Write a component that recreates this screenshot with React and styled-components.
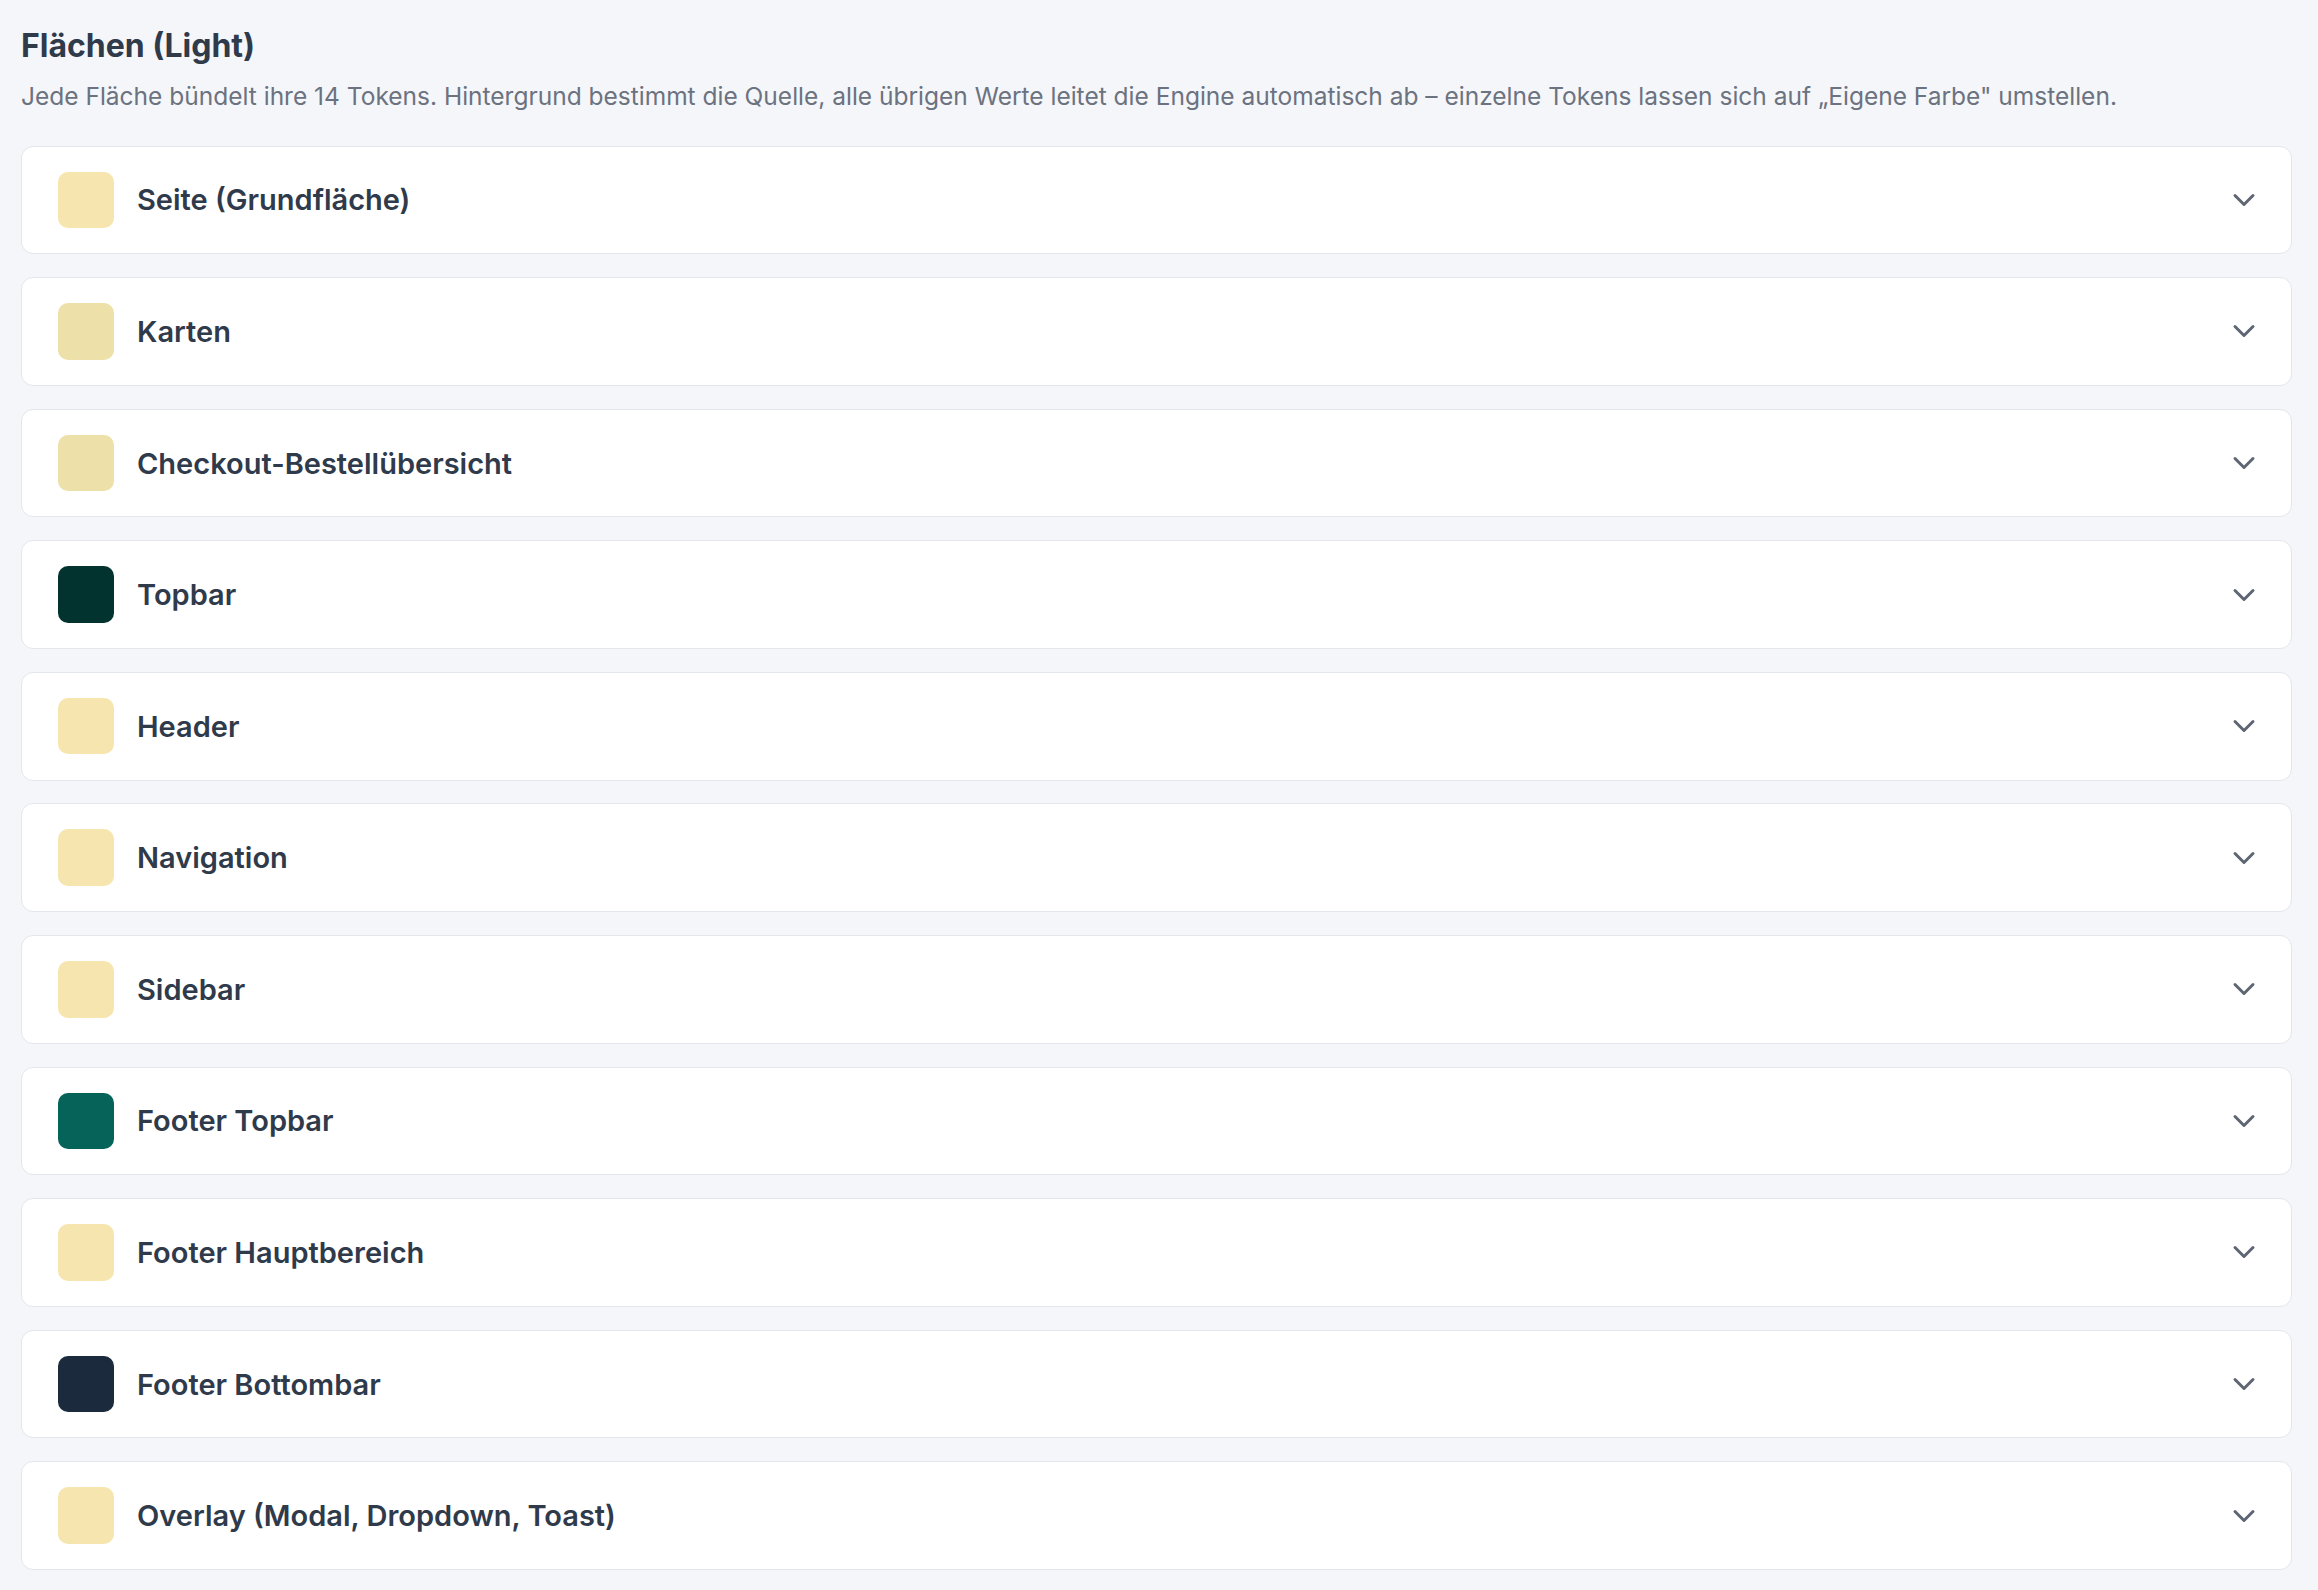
import React from "react";
import styled, { createGlobalStyle } from "styled-components";
import { ChevronDown } from "lucide-react";

const GlobalStyle = createGlobalStyle`
  html, body {
    margin: 0;
    padding: 0;
    background: #f5f6f9;
  }
  body {
    font-family: Inter, "Noto Sans", sans-serif;
    -webkit-font-smoothing: antialiased;
  }
`;

const SURFACES = [
  { name: "Seite (Grundfläche)", color: "#f6e5ae" },
  { name: "Karten", color: "#ede0a8" },
  { name: "Checkout-Bestellübersicht", color: "#ede0a8" },
  { name: "Topbar", color: "#03332f" },
  { name: "Header", color: "#f6e5ae" },
  { name: "Navigation", color: "#f6e5ae" },
  { name: "Sidebar", color: "#f6e5ae" },
  { name: "Footer Topbar", color: "#05635a" },
  { name: "Footer Hauptbereich", color: "#f6e5ae" },
  { name: "Footer Bottombar", color: "#1b2a3d" },
  { name: "Overlay (Modal, Dropdown, Toast)", color: "#f6e5ae" },
];

//styled component
const PageWrapper = styled.section`
  padding: 26px 26px 20px 21px;
  min-height: 100vh;
  box-sizing: border-box;
`;

const Title = styled.h2`
  margin: 0;
  font-size: 32px;
  line-height: 40px;
  font-weight: 700;
  color: #2f3a4b;
`;

const Subtitle = styled.p`
  margin: 13.5px 0 34px 0;
  font-size: 24.5px;
  line-height: 32px;
  color: #6b7280;
`;

const SurfaceList = styled.div`
  display: flex;
  flex-direction: column;
  gap: 22.9px;
`;

const SurfaceCard = styled.div`
  display: flex;
  align-items: center;
  height: 108.7px;
  box-sizing: border-box;
  padding: 0 29px 0 36px;
  background: #ffffff;
  border: 1px solid #e3e6eb;
  border-radius: 12px;
  cursor: pointer;
`;

const Swatch = styled.span`
  width: 56px;
  height: 56.5px;
  border-radius: 10px;
  flex-shrink: 0;
  background: ${(props) => props.color};
`;

const SurfaceName = styled.span`
  flex: 1;
  margin-left: 23px;
  font-size: 29px;
  font-weight: 600;
  color: #2f3a4b;
`;

const Chevron = styled(ChevronDown)`
  color: #5f6673;
  flex-shrink: 0;
`;

function App() {
  return (
    <>
      <GlobalStyle />
      <PageWrapper>
        <Title>Flächen (Light)</Title>
        <Subtitle>
          Jede Fläche bündelt ihre 14 Tokens. Hintergrund bestimmt die Quelle,
          alle übrigen Werte leitet die Engine automatisch ab – einzelne Tokens
          lassen sich auf „Eigene Farbe" umstellen.
        </Subtitle>
        <SurfaceList>
          {SURFACES.map((surface) => (
            <SurfaceCard key={surface.name}>
              <Swatch color={surface.color} />
              <SurfaceName>{surface.name}</SurfaceName>
              <Chevron size={36} strokeWidth={2} />
            </SurfaceCard>
          ))}
        </SurfaceList>
      </PageWrapper>
    </>
  );
}

export default App;
